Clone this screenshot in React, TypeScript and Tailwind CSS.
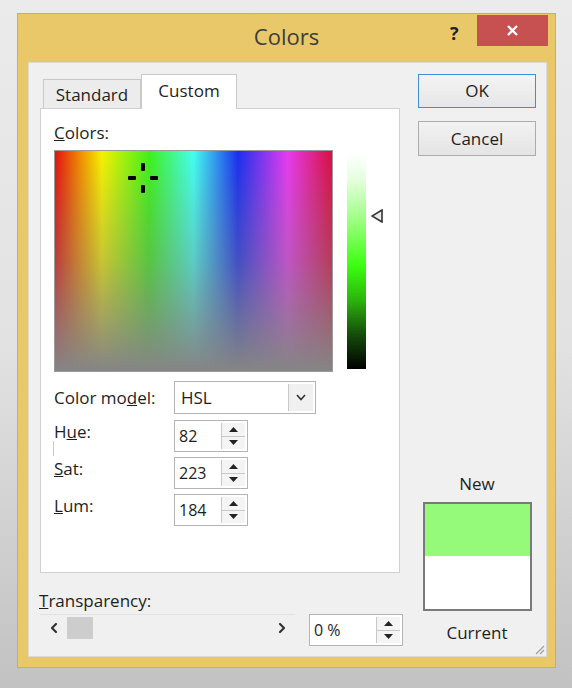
import { ChevronLeft, ChevronRight } from 'lucide-react';

const font = "font-['Segoe_UI','Open_Sans',sans-serif]";

function SpinButtons() {
  return (
    <div className="flex flex-col w-[24px] h-full border-l border-[#c8c8c8] bg-[#f4f4f4]">
      <div className="flex-1 flex items-center justify-center border-b border-[#c8c8c8]">
        <svg width="9" height="5" viewBox="0 0 9 5">
          <polygon points="0,5 9,5 4.5,0" fill="#222" />
        </svg>
      </div>
      <div className="flex-1 flex items-center justify-center">
        <svg width="9" height="5" viewBox="0 0 9 5">
          <polygon points="0,0 9,0 4.5,5" fill="#222" />
        </svg>
      </div>
    </div>
  );
}

function SpinBox({ value, width }: { value: string; width: string }) {
  return (
    <div className={`flex items-stretch ${width} h-[32px] bg-white border border-[#b4b4b4] p-[2px]`}>
      <div className="flex-1 flex items-center pl-[2px] text-[16px] text-[#1e1e1e]">{value}</div>
      <SpinButtons />
    </div>
  );
}

function FieldRow({ label, ul, rest, value }: { label: string; ul: string; rest: string; value: string }) {
  return (
    <div className="flex items-start">
      <div className="w-[120px] pt-[1px] text-[17px] leading-[22px] text-[#1e1e1e]">
        {label}
        <span className="underline">{ul}</span>
        {rest}
      </div>
      <SpinBox value={value} width="w-[74px]" />
    </div>
  );
}

export default function App() {
  return (
    <div className={`w-[572px] h-[688px] overflow-hidden bg-gradient-to-b from-[#ebebeb] via-[#e2e2e2] to-[#c2c2c2] pt-[13px] pl-[17px] ${font}`}>
      <div className="w-[539px] h-[655px] bg-[#e9c86a] border border-[#d2ae4f] flex flex-col">
        {/* title bar */}
        <div className="relative h-[48px] flex items-center justify-center">
          <span className="text-[22px] text-[#3d3d3d] -mt-[4px]">Colors</span>
          <span className="absolute left-[432px] top-[6px] text-[18px] font-bold text-[#222]">?</span>
          <div className="absolute right-[7px] top-[1px] w-[71px] h-[31px] bg-[#c75050] flex items-center justify-center">
            <svg width="13" height="13" viewBox="0 0 13 13">
              <path d="M2 2 L11 11 M11 2 L2 11" stroke="#fff" strokeWidth="2.4" />
            </svg>
          </div>
        </div>

        {/* client area */}
        <div className="relative ml-[10px] w-[519px] h-[595px] bg-[#f0f0f0] border border-[#d9d9d9] flex">
          {/* left column */}
          <div className="ml-[11px] w-[364px] flex flex-col">
            <div className="flex items-end h-[45px] pt-[11px]">
              <div className="ml-[3px] w-[98px] h-[29px] border border-b-0 border-[#c9c9c9] bg-[#ececec] flex items-center justify-center pt-[1px] text-[17px] text-[#1e1e1e]">
                Standard
              </div>
              <div className="relative z-10 -mb-px w-[96px] h-[35px] border border-b-0 border-[#c9c9c9] bg-white flex items-center justify-center pb-[3px] text-[17px] text-[#1e1e1e]">
                Custom
              </div>
            </div>
            <div className="w-[360px] h-[465px] bg-white border border-[#d0d0d0] pl-[13px] pt-[13px]">
              <div className="text-[17px] leading-[22px] text-[#1e1e1e]">
                <span className="underline">C</span>olors:
              </div>
              <div className="flex mt-[6px]">
                <div className="relative w-[279px] h-[222px] border border-[#9a9a9a] bg-[linear-gradient(to_right,#e41010_0%,#f28a00_9%,#f6f200_17%,#3ef21a_34%,#44fff0_50%,#1a2ff0_66%,#e83af0_84%,#d81040_100%)]">
                  <div className="absolute inset-0 bg-gradient-to-b from-transparent via-[#80808066] to-[#858585]" />
                  {/* crosshair */}
                  <div className="absolute left-[86px] top-[12px] w-[4px] h-[8px] bg-black rounded-[1px]" />
                  <div className="absolute left-[86px] top-[34px] w-[4px] h-[8px] bg-black rounded-[1px]" />
                  <div className="absolute left-[73px] top-[25px] w-[8px] h-[4px] bg-black rounded-[1px]" />
                  <div className="absolute left-[95px] top-[25px] w-[8px] h-[4px] bg-black rounded-[1px]" />
                </div>
                <div className="relative ml-[14px] mt-[3px] w-[19px] h-[216px] bg-[linear-gradient(to_bottom,#ffffff_0%,#e6ffe0_12%,#8cff6e_35%,#3cff10_52%,#2cb40c_68%,#154d0a_84%,#000000_100%)]">
                  <svg className="absolute left-[24px] top-[56px]" width="12" height="14" viewBox="0 0 12 14">
                    <polygon points="11,1 11,13 1,7" fill="#e8e8e8" stroke="#333" strokeWidth="1.6" />
                  </svg>
                </div>
              </div>

              <div className="flex items-center mt-[9px]">
                <div className="w-[120px] text-[17px] leading-[22px] text-[#1e1e1e]">
                  Color mo<span className="underline">d</span>el:
                </div>
                <div className="flex w-[142px] h-[33px] bg-white border border-[#b4b4b4] p-[2px]">
                  <div className="flex-1 flex items-center pl-[4px] text-[17px] text-[#1e1e1e]">HSL</div>
                  <div className="w-[25px] h-full bg-[#f0f0f0] border-l border-[#c8c8c8] flex items-center justify-center">
                    <svg width="10" height="7" viewBox="0 0 10 7">
                      <polyline points="1,1 5,5.5 9,1" fill="none" stroke="#333" strokeWidth="1.6" />
                    </svg>
                  </div>
                </div>
              </div>

              <div className="relative flex flex-col gap-[5px] mt-[6px]">
                <div className="absolute left-[-1px] top-[21px] w-px h-[15px] bg-[#c8c8c8]" />
                <FieldRow label="H" ul="u" rest="e:" value="82" />
                <FieldRow label="" ul="S" rest="at:" value="223" />
                <FieldRow label="" ul="L" rest="um:" value="184" />
              </div>
            </div>

            {/* transparency */}
            <div className="mt-[17px] -ml-[1px] text-[17px] leading-[22px] text-[#1e1e1e]">
              <span className="underline">T</span>ransparency:
            </div>
            <div className="flex items-start mt-[2px]">
              <div className="w-[255px] h-[27px] border-t border-[#e2e2e2] flex items-center">
                <ChevronLeft className="ml-[6px] w-[16px] h-[16px] text-[#333]" strokeWidth={3.2} />
                <div className="ml-[5px] w-[26px] h-[22px] bg-[#cdcdcd]" />
                <div className="flex-1" />
                <ChevronRight className="mr-[5px] w-[16px] h-[16px] text-[#333]" strokeWidth={3.2} />
              </div>
              <div className="ml-[14px]">
                <SpinBox value="0 %" width="w-[94px]" />
              </div>
            </div>
          </div>

          {/* right column */}
          <div className="ml-[14px] w-[118px] flex flex-col pb-[12px]">
            <div className="mt-[11px] h-[34px] border border-[#3c8fd8] bg-gradient-to-b from-[#f4f4f4] to-[#e6e6e6] flex items-center justify-center text-[17px] text-[#1e1e1e]">
              OK
            </div>
            <div className="mt-[13px] h-[35px] border border-[#acacac] bg-gradient-to-b from-[#f2f2f2] to-[#e4e4e4] flex items-center justify-center text-[17px] text-[#1e1e1e]">
              Cancel
            </div>
            <div className="mt-auto text-center text-[17px] leading-[22px] text-[#1e1e1e]">New</div>
            <div className="mt-[7px] ml-[5px] w-[109px] h-[109px] border-2 border-[#7a7a7a] flex flex-col">
              <div className="h-[52px] bg-[#95f97a]" />
              <div className="flex-1 bg-white" />
            </div>
            <div className="mt-[11px] text-center text-[17px] leading-[22px] text-[#1e1e1e]">Current</div>
          </div>

          {/* resize grip */}
          <svg className="absolute right-[1px] bottom-[1px]" width="12" height="12" viewBox="0 0 12 12">
            <path d="M11 3 L3 11 M11 7 L7 11" stroke="#a0a0a0" strokeWidth="1.2" />
          </svg>
        </div>
      </div>
    </div>
  );
}
